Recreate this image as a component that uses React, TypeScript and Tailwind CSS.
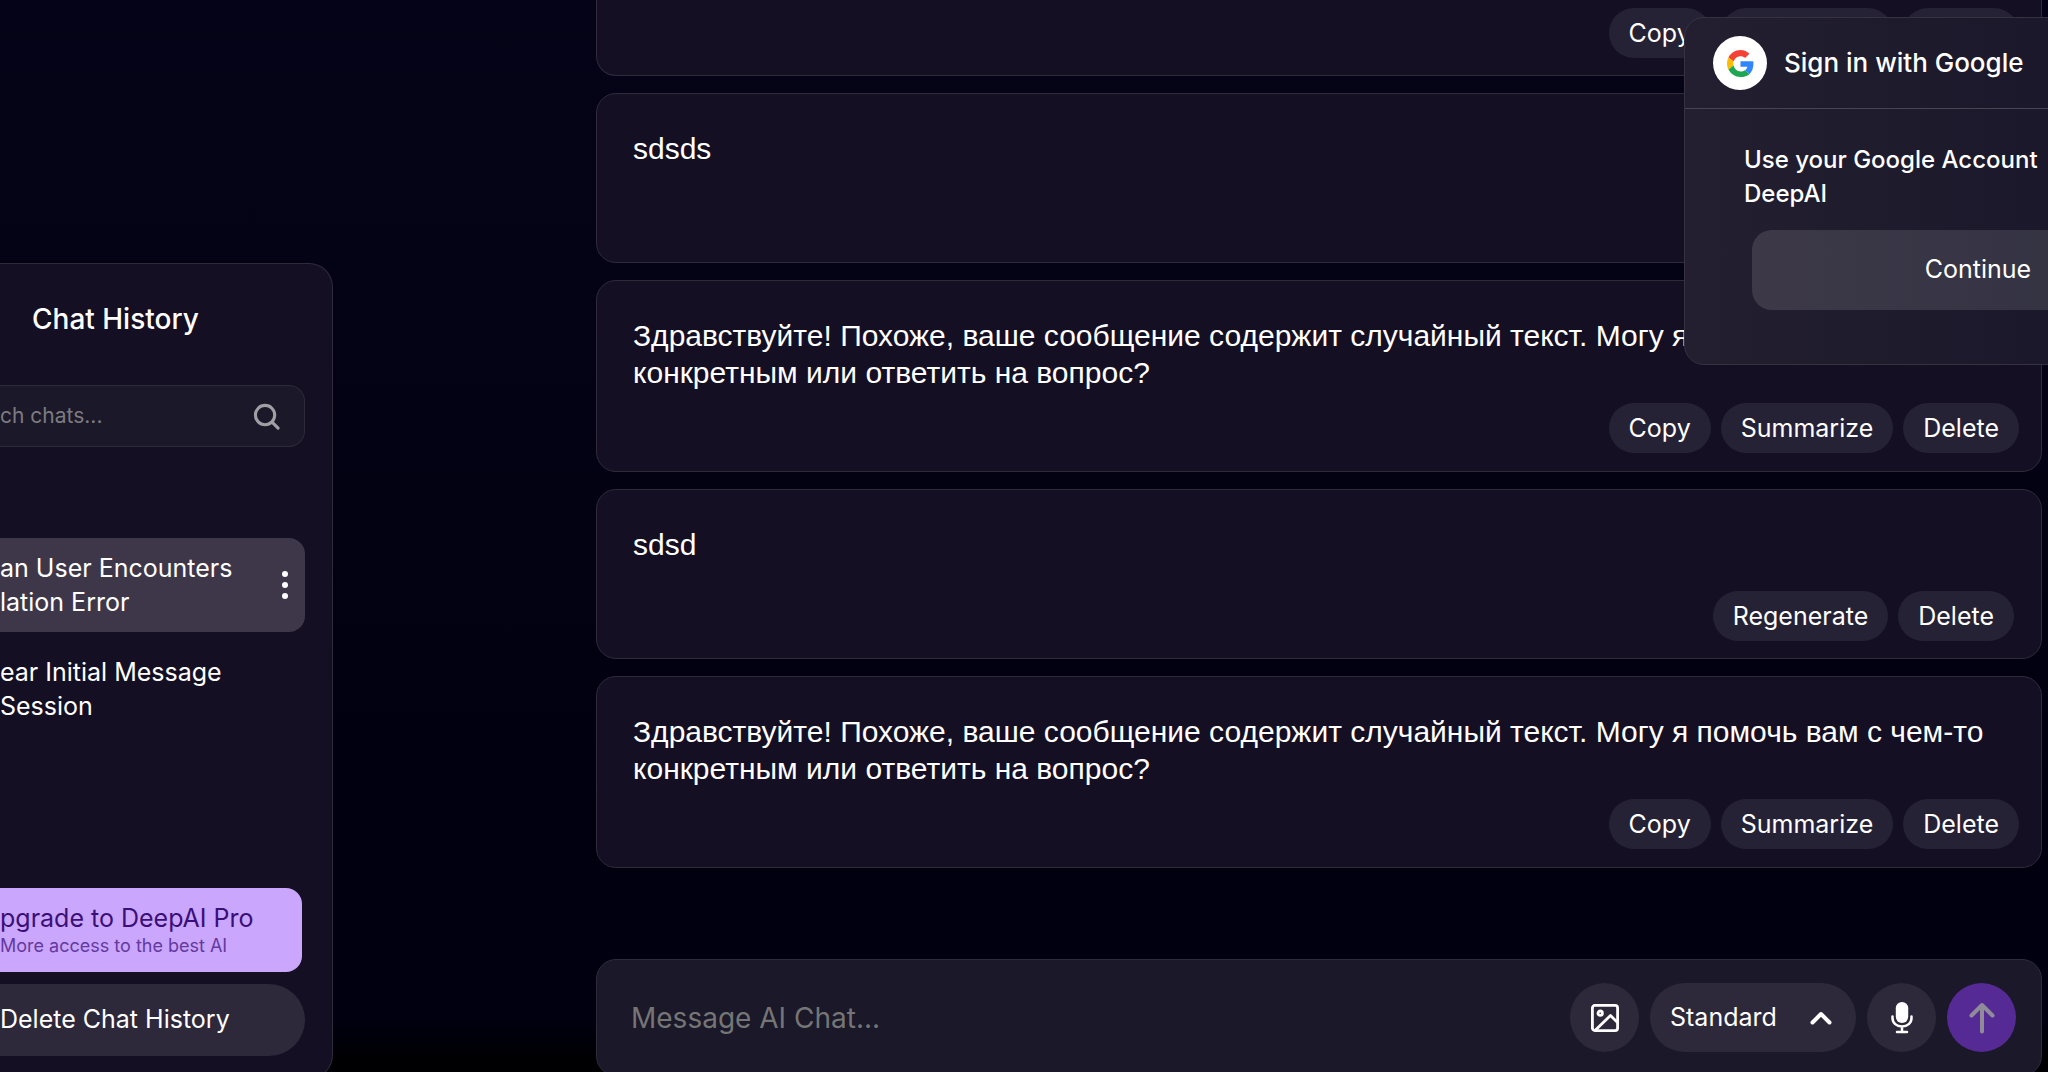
import type { ReactNode } from "react"

const reply = [
    "Здравствуйте! Похоже, ваше сообщение содержит случайный текст. Могу я помочь вам с чем-то",
    "конкретным или ответить на вопрос?",
]

const botActions = ["Copy", "Summarize", "Delete"]
const userActions = ["Regenerate", "Delete"]

function Actions({ items }: { items: string[] }) {
    return (
        <div className="flex justify-end gap-[10px]">
            {items.map((label) => (
                <button key={label} type="button" className="h-[50px] rounded-full bg-[#262235] px-5 text-[25px] leading-8 text-white">
                    {label}
                </button>
            ))}
        </div>
    )
}

function BotMessage() {
    return (
        <article className="rounded-[20px] border border-[#2f2b3b] bg-[#150f24] pt-9 pr-[22px] pb-[18px] pl-9">
            <p className="mb-3 font-['Liberation_Sans',sans-serif] text-[30px] leading-[37px] whitespace-nowrap text-white">
                {reply[0]}
                <br />
                {reply[1]}
            </p>
            <Actions items={botActions} />
        </article>
    )
}

function UserMessage({ children, actions = [] }: { children: ReactNode; actions?: string[] }) {
    return (
        <article className="min-h-[170px] rounded-[20px] border border-[#2f2b3b] bg-[#150f24] pt-9 pr-[27px] pb-[17px] pl-9">
            <p className="mb-7 font-['Liberation_Sans',sans-serif] text-[30px] leading-[37px] text-white">{children}</p>
            {actions.length > 0 && <Actions items={actions} />}
        </article>
    )
}

function Sidebar() {
    return (
        <aside className="mt-[263px] h-[816px] w-[333px] flex-none rounded-r-[24px] border border-l-0 border-[#2f2b3b] bg-[#150f24] pr-[27px]">
            <h2 className="mt-9 pl-8 text-[28px] leading-[38px] font-medium text-white">Chat History</h2>
            {/* search */}
            <label className="mt-[47px] flex h-[62px] items-center rounded-r-2xl border border-l-0 border-[#2d2a3a] bg-[#1a1829] pr-6">
                <input type="text" aria-label="Search chats" placeholder="ch chats..." className="min-w-0 flex-1 bg-transparent text-[21px] text-white outline-none placeholder:text-[#7d7b80]" />
                <svg className="size-[27px] text-[#a09fa4]" viewBox="0 0 28 28" fill="none" stroke="currentColor" strokeWidth="3.200" strokeLinecap="round">
                    <circle cx="12.500" cy="12.500" r="10" />
                    <path d="M19.800 19.800l6.200 6.200" />
                </svg>
            </label>
            {/* chats */}
            <div className="mt-[91px] flex h-[94px] items-center justify-between rounded-r-2xl bg-[#3e374a] pr-3">
                <a href="#" className="text-[25px] leading-[34px] text-white">an User Encounters<br />lation Error</a>
                <button type="button" aria-label="Chat options" className="flex w-4 flex-col items-center gap-[5px]">
                    <span className="h-[6px] w-[6px] rounded-full bg-white" />
                    <span className="h-[6px] w-[6px] rounded-full bg-white" />
                    <span className="h-[6px] w-[6px] rounded-full bg-white" />
                </button>
            </div>
            <a href="#" className="mt-[23px] block text-[25px] leading-[34px] text-white">ear Initial Message<br />Session</a>
            {/* bottom buttons */}
            <button type="button" className="mt-[165px] flex h-[84px] w-[302px] flex-col justify-center rounded-r-2xl bg-[#cba6fd] text-left">
                <span className="text-[25px] leading-8 text-[#3b0f78]">pgrade to DeepAI Pro</span>
                <span className="text-[18px] leading-6 text-[#633aa0]">More access to the best AI</span>
            </button>
            <button type="button" className="mt-3 h-[72px] w-full rounded-r-full bg-[#2e283b] text-left text-[25px] text-white">Delete Chat History</button>
        </aside>
    )
}

function Composer() {
    return (
        <form className="mt-[91px] flex h-[117px] flex-none items-center gap-[11px] rounded-[20px] border border-[#2f2b3b] bg-[#1a1829] pr-[25px] pl-[34px]">
            <input type="text" aria-label="Message" placeholder="Message AI Chat..." className="min-w-0 flex-1 bg-transparent text-[28px] text-white outline-none placeholder:text-[#757575]" />
            <button type="button" aria-label="Add image" className="flex size-[69px] items-center justify-center rounded-full bg-[#2e283b] text-white">
                <svg className="size-7" viewBox="0 0 28 28" fill="none" stroke="currentColor" strokeWidth="2.800" strokeLinejoin="round">
                    <rect x="1.400" y="1.400" width="25.200" height="25.200" rx="2.500" />
                    <circle cx="9.200" cy="9.200" r="2.200" />
                    <path d="M4.500 26L19.500 11.500l7 7" />
                </svg>
            </button>
            <button type="button" className="flex h-[69px] w-[206px] items-center justify-between rounded-full bg-[#2e283b] pr-6 pl-5 text-[25px] text-white">
                Standard
                <svg className="h-[14px] w-[22px]" viewBox="0 0 22 14" fill="none" stroke="currentColor" strokeWidth="4" strokeLinecap="round" strokeLinejoin="round">
                    <path d="M2.500 11.500L11 3l8.500 8.500" />
                </svg>
            </button>
            <button type="button" aria-label="Voice input" className="flex size-[69px] items-center justify-center rounded-full bg-[#2e283b] text-white">
                <svg className="h-8 w-[22px]" viewBox="0 0 22 32" fill="none" stroke="currentColor" strokeWidth="2.500" strokeLinecap="round">
                    <rect x="4.800" y="0" width="12.400" height="21" rx="6.200" fill="currentColor" stroke="none" />
                    <path d="M1.500 14.500v1.500c0 5 4 8.500 9.500 8.500s9.500-3.500 9.500-8.500v-1.500M11 24.500v5M6 30h10" />
                </svg>
            </button>
            <button type="submit" aria-label="Send" className="flex size-[69px] items-center justify-center rounded-full bg-[#552a94] text-[#908b98]">
                <svg className="h-8 w-[26px]" viewBox="0 0 26 32" fill="none" stroke="currentColor" strokeWidth="4" strokeLinecap="round" strokeLinejoin="round">
                    <path d="M13 29.500V3M2.500 13.500L13 3l10.500 10.500" />
                </svg>
            </button>
        </form>
    )
}

function GoogleSignIn() {
    return (
        <div className="absolute top-[17px] -right-[224px] h-[348px] w-[588px] rounded-[20px] border border-[#35313f] bg-linear-to-r from-[#231f31] to-[#151426] text-white">
            <header className="flex h-[91px] items-center gap-[17px] border-b border-[#484553] pl-7">
                <span className="flex size-[54px] items-center justify-center rounded-full bg-white">
                    <svg className="size-[27px]" viewBox="0 0 48 48">
                        <path fill="#F44336" d="M24 11c3.200 0 6 1.100 8.300 3.200l7.600-7.600C35.900 2.500 30.400 0 24 0 14.620 0 6.510 5.380 2.560 13.220l9.200 7.100C13.500 15 18.300 11 24 11z" />
                        <path fill="#3186FB" d="M47 24.550c0-1.570-.15-3.090-.38-4.550H24v9.600h12.300c-.6 2.600-2.100 4.700-4.400 6.200l8 7.200c4.510-4.180 7.100-10.800 7.100-18.450z" />
                        <path fill="#FBBC05" d="M11.750 27.700c-.4-1.200-.6-2.400-.6-3.700s.2-2.500.6-3.700l-9.200-7.080C.92 16.460 0 20.120 0 24c0 3.880.92 7.540 2.560 10.780l9.190-7.080z" />
                        <path fill="#1FA652" d="M24 48c6.480 0 11.930-1.800 15.890-5l-8-7.200c-2.100 1.400-4.800 2.200-7.890 2.200-5.700 0-10.500-3.900-12.250-10.300l-9.190 7.080C6.510 42.620 14.620 48 24 48z" />
                    </svg>
                </span>
                <h3 className="text-[26px] leading-8 font-medium">Sign in with Google</h3>
            </header>
            <p className="mt-[34px] pl-[59px] text-[24px] leading-[34px] font-medium">Use your Google Account<br />DeepAI</p>
            <button type="button" className="mt-[19px] ml-[67px] h-20 w-[452px] rounded-[20px] bg-white/12 text-[25px]">Continue</button>
        </div>
    )
}

export default function App() {
    return (
        <div className="relative h-screen overflow-hidden bg-[linear-gradient(to_bottom,#050317_0%,#030213_50%,#000010_75%,#000010_95%,#000002_99%)] font-['Inter',sans-serif]">
            <div className="flex items-start justify-between gap-[263px] pr-[6px]">
                <Sidebar />
                <main className="flex min-w-0 flex-1 flex-col">
                    <div className="flex flex-col gap-[17px]">
                        <article className="rounded-b-[20px] border border-t-0 border-[#2f2b3b] bg-[#150f24] pt-2 pr-[22px] pb-[17px]">
                            <Actions items={botActions} />
                        </article>
                        <UserMessage>sdsds</UserMessage>
                        <BotMessage />
                        <UserMessage actions={userActions}>sdsd</UserMessage>
                        <BotMessage />
                    </div>
                    <Composer />
                </main>
            </div>
            <GoogleSignIn />
        </div>
    )
}
